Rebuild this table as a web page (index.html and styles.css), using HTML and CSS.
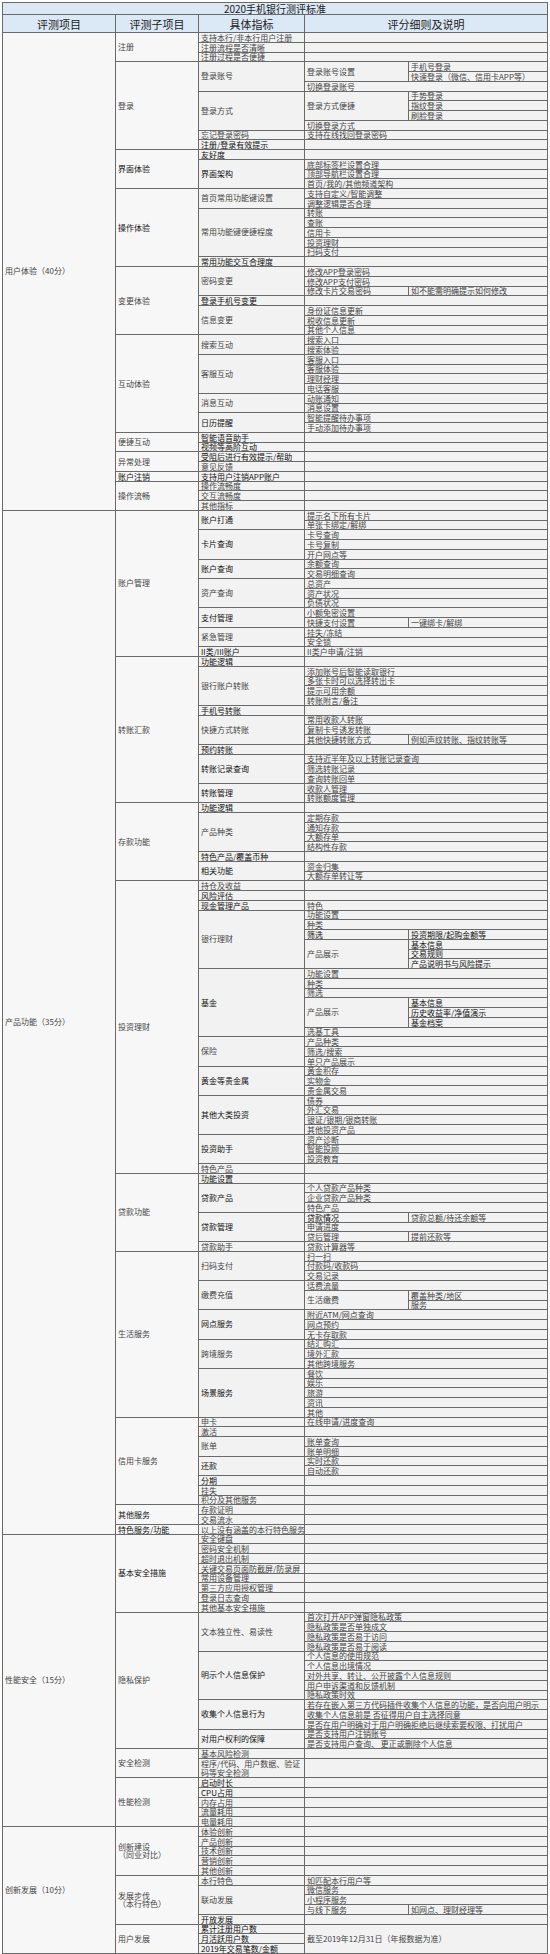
FILE: index.html
```html
<!DOCTYPE html>
<html lang="zh-CN">
<head>
<meta charset="utf-8">
<title>2020手机银行测评标准</title>
<link rel="stylesheet" href="styles.css">
</head>
<body>
<table class="sheet">
<colgroup><col class="ca"><col class="cb"><col class="cc"><col class="cd"><col class="ce"></colgroup>
<tr class="title"><td colspan="5">2020手机银行测评标准</td></tr>
<tr class="head"><td>评测项目</td><td>评测子项目</td><td>具体指标</td><td colspan="2">评分细则及说明</td></tr>

<tr><td class="a m" rowspan="49">用户体验（40分）</td><td class="b m" rowspan="3">注册</td><td>支持本行/非本行用户注册</td><td colspan="2"></td></tr>
<tr><td>注册流程是否清晰</td><td colspan="2"></td></tr>
<tr><td>注册过程是否便捷</td><td colspan="2"></td></tr>
<tr><td class="b m" rowspan="9">登录</td><td class="m" rowspan="3">登录账号</td><td class="m" rowspan="2">登录账号设置</td><td>手机号登录</td></tr>
<tr><td>快速登录（微信、信用卡APP等）</td></tr>
<tr><td colspan="2">切换登录账号</td></tr>
<tr><td class="m" rowspan="4">登录方式</td><td class="m" rowspan="3">登录方式便捷</td><td>手势登录</td></tr>
<tr><td>指纹登录</td></tr>
<tr><td>刷脸登录</td></tr>
<tr><td colspan="2">切换登录方式</td></tr>
<tr><td>忘记登录密码</td><td colspan="2">支持在线找回登录密码</td></tr>
<tr><td class="k">注册/登录有效提示</td><td colspan="2"></td></tr>
<tr><td class="b m k" rowspan="4">界面体验</td><td class="k">友好度</td><td colspan="2"></td></tr>
<tr><td class="m k" rowspan="3">界面架构</td><td colspan="2">底部标签栏设置合理</td></tr>
<tr><td colspan="2">顶部导航栏设置合理</td></tr>
<tr><td colspan="2">首页/我的/其他频道架构</td></tr>
<tr><td class="b m k" rowspan="8">操作体验</td><td class="m" rowspan="2">首页常用功能键设置</td><td colspan="2">支持自定义/智能调整</td></tr>
<tr><td colspan="2">调整逻辑是否合理</td></tr>
<tr><td class="m" rowspan="5">常用功能键便捷程度</td><td colspan="2">转账</td></tr>
<tr><td colspan="2">查账</td></tr>
<tr><td colspan="2">信用卡</td></tr>
<tr><td colspan="2">投资理财</td></tr>
<tr><td colspan="2">扫码支付</td></tr>
<tr><td class="k">常用功能交互合理度</td><td colspan="2"></td></tr>
<tr><td class="b m" rowspan="7">变更体验</td><td class="m" rowspan="3">密码变更</td><td colspan="2">修改APP登录密码</td></tr>
<tr><td colspan="2">修改APP支付密码</td></tr>
<tr><td>修改卡片交易密码</td><td>如不能需明确提示如何修改</td></tr>
<tr><td class="k">登录手机号变更</td><td colspan="2"></td></tr>
<tr><td class="m" rowspan="3">信息变更</td><td colspan="2">身份证信息更新</td></tr>
<tr><td colspan="2">税收信息更新</td></tr>
<tr><td colspan="2">其他个人信息</td></tr>
<tr><td class="b m" rowspan="10">互动体验</td><td class="m" rowspan="2">搜索互动</td><td colspan="2">搜索入口</td></tr>
<tr><td colspan="2">搜索体验</td></tr>
<tr><td class="m" rowspan="4">客服互动</td><td colspan="2">客服入口</td></tr>
<tr><td colspan="2">客服体验</td></tr>
<tr><td colspan="2">理财经理</td></tr>
<tr><td colspan="2">电话客服</td></tr>
<tr><td class="m" rowspan="2">消息互动</td><td colspan="2">动账通知</td></tr>
<tr><td colspan="2">消息设置</td></tr>
<tr><td class="m k" rowspan="2">日历提醒</td><td colspan="2">智能提醒待办事项</td></tr>
<tr><td colspan="2">手动添加待办事项</td></tr>
<tr><td class="b m" rowspan="2">便捷互动</td><td class="k">智能语音助手</td><td colspan="2"></td></tr>
<tr><td class="k">视频等高阶互动</td><td colspan="2"></td></tr>
<tr><td class="b m" rowspan="2">异常处理</td><td class="k">受阻后进行有效提示/帮助</td><td colspan="2"></td></tr>
<tr><td>意见反馈</td><td colspan="2"></td></tr>
<tr><td class="b k">账户注销</td><td class="k">支持用户注销APP账户</td><td colspan="2"></td></tr>
<tr><td class="b m" rowspan="3">操作流畅</td><td>操作流畅度</td><td colspan="2"></td></tr>
<tr><td>交互流畅度</td><td colspan="2"></td></tr>
<tr><td>其他指标</td><td colspan="2"></td></tr>

<tr><td class="a m" rowspan="105">产品功能（35分）</td><td class="b m" rowspan="15">账户管理</td><td class="m k" rowspan="2">账户打通</td><td colspan="2">提示名下所有卡片</td></tr>
<tr><td colspan="2">单张卡绑定/解绑</td></tr>
<tr><td class="m k" rowspan="3">卡片查询</td><td colspan="2">卡号查询</td></tr>
<tr><td colspan="2">卡号复制</td></tr>
<tr><td colspan="2">开户网点等</td></tr>
<tr><td class="m k" rowspan="2">账户查询</td><td colspan="2">余额查询</td></tr>
<tr><td colspan="2">交易明细查询</td></tr>
<tr><td class="m" rowspan="3">资产查询</td><td colspan="2">总资产</td></tr>
<tr><td colspan="2">资产状况</td></tr>
<tr><td colspan="2">负债状况</td></tr>
<tr><td class="m k" rowspan="2">支付管理</td><td colspan="2">小额免密设置</td></tr>
<tr><td>快捷支付设置</td><td>一键绑卡/解绑</td></tr>
<tr><td class="m" rowspan="2">紧急管理</td><td colspan="2">挂失/冻结</td></tr>
<tr><td colspan="2">安全锁</td></tr>
<tr><td class="k">II类/III账户</td><td colspan="2">II类户申请/注销</td></tr>
<tr><td class="b m" rowspan="15">转账汇款</td><td class="k">功能逻辑</td><td colspan="2"></td></tr>
<tr><td class="m" rowspan="4">银行账户转账</td><td colspan="2">添加账号后智能读取银行</td></tr>
<tr><td colspan="2">多张卡时可以选择转出卡</td></tr>
<tr><td colspan="2">提示可用余额</td></tr>
<tr><td colspan="2">转账附言/备注</td></tr>
<tr><td class="k">手机号转账</td><td colspan="2"></td></tr>
<tr><td class="m" rowspan="3">快捷方式转账</td><td colspan="2">常用收款人转账</td></tr>
<tr><td colspan="2">复制卡号诱发转账</td></tr>
<tr><td>其他快捷转账方式</td><td>例如声纹转账、指纹转账等</td></tr>
<tr><td class="k">预约转账</td><td colspan="2"></td></tr>
<tr><td class="m k" rowspan="3">转账记录查询</td><td colspan="2">支持近半年及以上转账记录查询</td></tr>
<tr><td colspan="2">筛选转账记录</td></tr>
<tr><td colspan="2">查询转账回单</td></tr>
<tr><td class="m k" rowspan="2">转账管理</td><td colspan="2">收款人管理</td></tr>
<tr><td colspan="2">转账额度管理</td></tr>
<tr><td class="b m" rowspan="8">存款功能</td><td class="k">功能逻辑</td><td colspan="2"></td></tr>
<tr><td class="m" rowspan="4">产品种类</td><td colspan="2">定期存款</td></tr>
<tr><td colspan="2">通知存款</td></tr>
<tr><td colspan="2">大额存单</td></tr>
<tr><td colspan="2">结构性存款</td></tr>
<tr><td class="k">特色产品/覆盖币种</td><td colspan="2"></td></tr>
<tr><td class="m k" rowspan="2">相关功能</td><td colspan="2">资金归集</td></tr>
<tr><td colspan="2">大额存单转让等</td></tr>
<tr><td class="b m" rowspan="30">投资理财</td><td>持仓及收益</td><td colspan="2"></td></tr>
<tr><td class="k">风险评估</td><td colspan="2"></td></tr>
<tr><td class="k">现金管理产品</td><td colspan="2">特色</td></tr>
<tr><td class="m" rowspan="6">银行理财</td><td colspan="2">功能设置</td></tr>
<tr><td colspan="2">种类</td></tr>
<tr><td class="k">筛选</td><td class="k">投资期限/起购金额等</td></tr>
<tr><td class="m" rowspan="3">产品展示</td><td class="k">基本信息</td></tr>
<tr><td class="k">交易规则</td></tr>
<tr><td class="k">产品说明书与风险提示</td></tr>
<tr><td class="m k" rowspan="7">基金</td><td colspan="2">功能设置</td></tr>
<tr><td colspan="2">种类</td></tr>
<tr><td colspan="2">筛选</td></tr>
<tr><td class="m" rowspan="3">产品展示</td><td class="k">基本信息</td></tr>
<tr><td class="k">历史收益率/净值演示</td></tr>
<tr><td class="k">基金档案</td></tr>
<tr><td colspan="2">选基工具</td></tr>
<tr><td class="m" rowspan="3">保险</td><td colspan="2">产品种类</td></tr>
<tr><td colspan="2">筛选/搜索</td></tr>
<tr><td colspan="2">单只产品展示</td></tr>
<tr><td class="m k" rowspan="3">黄金等贵金属</td><td colspan="2">黄金积存</td></tr>
<tr><td colspan="2">实物金</td></tr>
<tr><td colspan="2">贵金属交易</td></tr>
<tr><td class="m k" rowspan="4">其他大类投资</td><td colspan="2">债券</td></tr>
<tr><td colspan="2">外汇交易</td></tr>
<tr><td colspan="2">银证/银期/银商转账</td></tr>
<tr><td colspan="2">其他投资产品</td></tr>
<tr><td class="m k" rowspan="3">投资助手</td><td colspan="2">资产诊断</td></tr>
<tr><td colspan="2">智能投顾</td></tr>
<tr><td colspan="2">投资教育</td></tr>
<tr><td>特色产品</td><td colspan="2"></td></tr>
<tr><td class="b m" rowspan="8">贷款功能</td><td class="k">功能设置</td><td colspan="2"></td></tr>
<tr><td class="m k" rowspan="3">贷款产品</td><td colspan="2">个人贷款产品种类</td></tr>
<tr><td colspan="2">企业贷款产品种类</td></tr>
<tr><td colspan="2">特色产品</td></tr>
<tr><td class="m k" rowspan="3">贷款管理</td><td class="k">贷款情况</td><td>贷款总额/待还余额等</td></tr>
<tr><td colspan="2">申请进度</td></tr>
<tr><td>贷后管理</td><td>提前还款等</td></tr>
<tr><td>贷款助手</td><td colspan="2">贷款计算器等</td></tr>
<tr><td class="b m" rowspan="17">生活服务</td><td class="m" rowspan="3">扫码支付</td><td colspan="2">扫一扫</td></tr>
<tr><td colspan="2">付款码/收款码</td></tr>
<tr><td colspan="2">交易记录</td></tr>
<tr><td class="m" rowspan="3">缴费充值</td><td colspan="2">话费流量</td></tr>
<tr><td class="m" rowspan="2">生活缴费</td><td>覆盖种类/地区</td></tr>
<tr><td>服务</td></tr>
<tr><td class="m k" rowspan="3">网点服务</td><td colspan="2">附近ATM/网点查询</td></tr>
<tr><td colspan="2">网点预约</td></tr>
<tr><td colspan="2">无卡存取款</td></tr>
<tr><td class="m" rowspan="3">跨境服务</td><td colspan="2">结汇购汇</td></tr>
<tr><td colspan="2">境外汇款</td></tr>
<tr><td colspan="2">其他跨境服务</td></tr>
<tr><td class="m k" rowspan="5">场景服务</td><td colspan="2">餐饮</td></tr>
<tr><td colspan="2">娱乐</td></tr>
<tr><td colspan="2">旅游</td></tr>
<tr><td colspan="2">资讯</td></tr>
<tr><td colspan="2">其他</td></tr>
<tr><td class="b m" rowspan="9">信用卡服务</td><td>申卡</td><td colspan="2">在线申请/进度查询</td></tr>
<tr><td>激活</td><td colspan="2"></td></tr>
<tr><td class="m" rowspan="2">账单</td><td colspan="2">账单查询</td></tr>
<tr><td colspan="2">账单明细</td></tr>
<tr><td class="m k" rowspan="2">还款</td><td colspan="2">实时还款</td></tr>
<tr><td colspan="2">自动还款</td></tr>
<tr><td class="k">分期</td><td colspan="2"></td></tr>
<tr><td>挂失</td><td colspan="2"></td></tr>
<tr><td>积分及其他服务</td><td colspan="2"></td></tr>
<tr><td class="b m k" rowspan="2">其他服务</td><td>存款证明</td><td colspan="2"></td></tr>
<tr><td>交易流水</td><td colspan="2"></td></tr>
<tr><td class="b k">特色服务/功能</td><td>以上没有涵盖的本行特色服务</td><td colspan="2"></td></tr>

<tr><td class="a m" rowspan="30">性能安全（15分）</td><td class="b m k" rowspan="8">基本安全措施</td><td>安全键盘</td><td colspan="2"></td></tr>
<tr><td>密码安全机制</td><td colspan="2"></td></tr>
<tr><td>超时退出机制</td><td colspan="2"></td></tr>
<tr><td>关键交易页面防截屏/防录屏</td><td colspan="2"></td></tr>
<tr><td>常用设备管理</td><td colspan="2"></td></tr>
<tr><td>第三方应用授权管理</td><td colspan="2"></td></tr>
<tr><td>登录日志查询</td><td colspan="2"></td></tr>
<tr><td>其他基本安全措施</td><td colspan="2"></td></tr>
<tr><td class="b m" rowspan="14">隐私保护</td><td class="m" rowspan="4">文本独立性、易读性</td><td colspan="2">首次打开APP弹窗隐私政策</td></tr>
<tr><td colspan="2">隐私政策是否单独成文</td></tr>
<tr><td colspan="2">隐私政策是否易于访问</td></tr>
<tr><td colspan="2">隐私政策是否易于阅读</td></tr>
<tr><td class="m k" rowspan="5">明示个人信息保护</td><td colspan="2">个人信息的使用规范</td></tr>
<tr><td colspan="2">个人信息出境情况</td></tr>
<tr><td colspan="2">对外共享、转让、公开披露个人信息规则</td></tr>
<tr><td colspan="2">用户申诉渠道和反馈机制</td></tr>
<tr><td colspan="2">隐私政策时效</td></tr>
<tr><td class="m k" rowspan="3">收集个人信息行为</td><td colspan="2">若存在嵌入第三方代码插件收集个人信息的功能，是否向用户明示</td></tr>
<tr><td colspan="2">收集个人信息前是 否征得用户自主选择同意</td></tr>
<tr><td colspan="2">是否在用户明确对于用户明确拒绝后继续索要权限、打扰用户</td></tr>
<tr><td class="m k" rowspan="2">对用户权利的保障</td><td colspan="2">是否支持用户注销账号</td></tr>
<tr><td colspan="2">是否支持用户查询、 更正或删除个人信息</td></tr>
<tr><td class="b m" rowspan="3">安全检测</td><td>基本风险检测</td><td colspan="2"></td></tr>
<tr><td class="wrap" rowspan="2">程序/代码、用户数据、验证码等安全检测</td><td colspan="2" rowspan="2"></td></tr>
<tr></tr>
<tr><td class="b m" rowspan="5">性能检测</td><td class="k">启动时长</td><td colspan="2"></td></tr>
<tr><td class="k">CPU占用</td><td colspan="2"></td></tr>
<tr><td>内存占用</td><td colspan="2"></td></tr>
<tr><td>流量耗用</td><td colspan="2"></td></tr>
<tr><td>电量耗用</td><td colspan="2"></td></tr>

<tr><td class="a m" rowspan="13">创新发展（10分）</td><td class="b m" rowspan="5">创新建设<br>（同业对比）</td><td>体验创新</td><td colspan="2"></td></tr>
<tr><td>产品创新</td><td colspan="2"></td></tr>
<tr><td>技术创新</td><td colspan="2"></td></tr>
<tr><td>营销创新</td><td colspan="2"></td></tr>
<tr><td>其他创新</td><td colspan="2"></td></tr>
<tr><td class="b m" rowspan="5">发展步伐<br>（本行特色）</td><td>本行特色</td><td colspan="2">如匹配本行用户等</td></tr>
<tr><td class="m" rowspan="3">联动发展</td><td colspan="2">微信服务</td></tr>
<tr><td colspan="2">小程序服务</td></tr>
<tr><td>与线下服务</td><td>如网点、理财经理等</td></tr>
<tr><td class="k">开放发展</td><td colspan="2"></td></tr>
<tr><td class="b m" rowspan="3">用户发展</td><td class="k">累计注册用户数</td><td class="m" colspan="2" rowspan="3">截至2019年12月31日（年报数据为准）</td></tr>
<tr><td class="k">月活跃用户数</td></tr>
<tr><td class="k">2019年交易笔数/金额</td></tr>
</table>
</body>
</html>
```

FILE: styles.css
```css
html, body {
  margin: 0;
  padding: 0;
  background: #ffffff;
}

.sheet {
  margin: 2px 0 0 2px;
  width: 545px;
  table-layout: fixed;
  border-collapse: collapse;
  font-family: "Noto Sans CJK SC", "Noto Sans CJK TC", sans-serif;
  font-size: 8px;
  color: #444;
}

.ca { width: 113px; }
.cb { width: 83px; }
.cc { width: 106px; }
.cd { width: 104px; }
.ce { width: 139px; }

.sheet tr {
  height: 9.75px;
}

.sheet td {
  border: 1px solid #6a6a6a;
  padding: 0 0 0 2px;
  line-height: 8px;
  white-space: nowrap;
  overflow: hidden;
  vertical-align: bottom;
  background: #f2f2f2;
}

.sheet td.m {
  vertical-align: middle;
}

.sheet td.a,
.sheet td.b {
  background: #f7f7f7;
  white-space: normal;
}

.sheet td.wrap {
  white-space: normal;
  vertical-align: middle;
  line-height: 9px;
}

.sheet td.k {
  color: #111;
}

.sheet tr.title {
  height: 12px;
}

.sheet tr.title td {
  background: #dbe8f5;
  text-align: center;
  font-size: 10px;
  line-height: 11px;
  color: #222;
  padding: 0;
}

.sheet tr.head {
  height: 18px;
}

.sheet tr.head td {
  background: #dbe8f5;
  text-align: center;
  font-size: 11px;
  line-height: 16px;
  color: #222;
  padding: 0;
  vertical-align: middle;
}
```
